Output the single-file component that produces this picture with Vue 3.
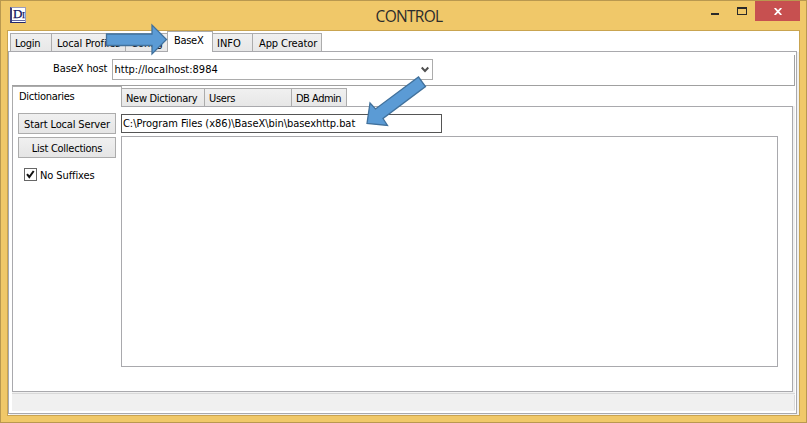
<script setup>
import { ref } from 'vue'

const mainTabs = [
  { name: 'Login', key: 'login' },
  { name: 'Local Profiles', key: 'profiles' },
  { name: 'Config', key: 'config' },
  { name: 'BaseX', key: 'basex' },
  { name: 'INFO', key: 'info' },
  { name: 'App Creator', key: 'creator' },
]
const subTabs = [
  { name: 'Dictionaries', key: 'dicts' },
  { name: 'New Dictionary', key: 'newdict' },
  { name: 'Users', key: 'users' },
  { name: 'DB Admin', key: 'admin' },
]
const active = ref('basex')
const activeSub = ref('dicts')
const host = ref('http://localhost:8984')
const serverPath = ref('C:\\Program Files (x86)\\BaseX\\bin\\basexhttp.bat')
const noSuffixes = ref(true)
</script>

<template>
  <div class="window">
    <header class="titlebar">
      <span class="app-icon"><span>D<small>I</small></span></span>
      <h1>CONTROL</h1>
      <div class="controls">
        <span class="min"></span>
        <span class="max"></span>
        <span class="close">
          <svg width="8" height="7" viewBox="0 0 8 7"><path d="M.7 0 7.3 7M7.3 0 .7 7" stroke="#fff" stroke-width="1.8" /></svg>
        </span>
      </div>
    </header>

    <main class="client">
      <nav class="tabs main-tabs">
        <button v-for="t in mainTabs" :key="t.key" :class="['tab', t.key, { active: active === t.key }]" @click="active = t.key"><span>{{ t.name }}</span></button>
      </nav>
      <section class="page">
        <div class="host-row">
          <span class="host-label">BaseX host</span>
          <div class="combo">
            <span class="host-text">{{ host }}</span>
            <svg width="8" height="7" viewBox="0 0 8 7"><path d="M.7 1.5 4 5 7.3 1.5" fill="none" stroke="#505050" stroke-width="2" /></svg>
          </div>
        </div>
        <nav class="tabs sub-tabs">
          <button v-for="t in subTabs" :key="t.key" :class="['tab', t.key, { active: activeSub === t.key }]" @click="activeSub = t.key"><span>{{ t.name }}</span></button>
        </nav>
        <section class="subpage">
          <aside class="actions">
            <button class="btn"><span class="start-text">Start Local Server</span></button>
            <button class="btn"><span class="list-text">List Collections</span></button>
            <div class="check" @click="noSuffixes = !noSuffixes">
              <span class="box"><svg v-if="noSuffixes" width="11" height="11" viewBox="0 0 11 11"><path d="M2 5.2 4.3 8 8.7 2" fill="none" stroke="#111" stroke-width="2" /></svg></span>
              <span class="check-text">No Suffixes</span>
            </div>
          </aside>
          <div class="fields">
            <div class="path"><span class="path-text">{{ serverPath }}</span></div>
            <div class="list"></div>
          </div>
        </section>
        <footer class="status"><span></span></footer>
      </section>
    </main>

    <svg class="arrows" width="807" height="423" viewBox="0 0 807 423">
      <g fill="#5b9bd5" stroke="#41719c" stroke-width="1.3">
        <path d="M106.5 34H152V25L166.5 39.5 152 54V45.5H106.5Z" />
        <path d="M418.5 77 425.5 86.500 383 118.500 387.500 125.500 367 123.500 370 103 375.500 109Z" />
      </g>
    </svg>
  </div>
</template>

<style>
body { margin: 0; overflow: hidden; }
</style>

<style scoped>
* { box-sizing: border-box; }
.window {
  position: relative; width: 807px; height: 423px; padding: 0 6px 6px;
  border: 1px solid #b9984f; background: #f0c869; color: #000;
  font: 11px/14px "DejaVu Sans Condensed", "DejaVu Sans", sans-serif;
}
.titlebar { height: 29px; display: grid; grid-template-columns: 100px 1fr 100px; align-items: start; }
.app-icon {
  display: block; width: 16px; height: 16px; margin: 6px 0 0 3px; padding-left: 1px;
  border: 1px solid #9a9cbc; border-left: 2px solid #3b3f7c; border-bottom: 1px solid #22266c;
  box-shadow: inset 0 -1px 0 #fff, inset 0 -2px 0 #6468a0;
  background: #fff; color: #10105c; font: 13px/12px "Liberation Serif", serif;
}
.app-icon span { display: block; white-space: nowrap; letter-spacing: -0.5px; -webkit-text-stroke: 0.25px #10105c; }
.app-icon small { font-size: 9px; }
h1 { margin: 5px 0 0 11px; text-align: center; font: 15.5px/20px "Open Sans", sans-serif; letter-spacing: -0.7px; color: #2c2c2c; }
.controls { display: flex; justify-content: flex-end; }
.min { width: 8px; height: 2px; margin: 12px 18px 0 0; background: #2a2a2a; flex: none; }
.max { width: 10px; height: 8px; margin: 6px 8px 0 0; border: 1px solid #2a2a2a; border-top-width: 2px; flex: none; }
.close { width: 45px; height: 20px; flex: none; background: #c75050; display: flex; align-items: center; justify-content: center; }
.client { width: 793px; height: 386px; border: 1px solid #c9a450; background: #fff; }
.tabs { display: flex; align-items: flex-end; }
button { font: inherit; color: inherit; margin: 0; }
.tab {
  height: 18px; padding: 2px 0 0 5px; text-align: left; white-space: nowrap; flex: none;
  border: 1px solid #acacac; border-bottom: 0; border-left-width: 0;
  background: linear-gradient(#f0f0f0, #e7e7e7);
}
.main-tabs { height: 20px; padding-left: 2px; }
.tab span, .combo span, .btn span, .path span, .check-text, .host-label { display: inline-block; white-space: nowrap; }
.login { width: 42px; border-left-width: 1px; padding-left: 4px; letter-spacing: -0.3px; }
.profiles { width: 74px; letter-spacing: -0.1px; }
.config { width: 42px; }
.basex { width: 46px; letter-spacing: -0.3px; }
.info { width: 40px; padding-left: 4px; }
.creator { width: 69px; padding-left: 6px; letter-spacing: -0.1px; }
.tab.active { position: relative; height: 21px; background: #fff; margin-bottom: -1px; }
.main-tabs .active { border-left-width: 1px; margin-left: -1px; padding: 0 0 2px 6px; }
.page { width: 789px; height: 363px; border: 1px solid #a9a9ad; box-shadow: 2px 1px 0 #f0f0f0; padding-left: 3px; }
.host-row { width: 783px; height: 34px; display: flex; align-items: flex-start; padding-top: 7px; border-bottom: 1px solid #a0a0a0; background: linear-gradient(#a0a0a0, #a0a0a0) right bottom / 1px 30px no-repeat; }
.host-label { width: 100px; padding: 3px 0 0 41px; letter-spacing: -0.1px; }
.combo { width: 321px; height: 21px; border: 1px solid #acacac; display: flex; justify-content: space-between; align-items: center; padding: 0 3px 0 1.5px; }
.sub-tabs { height: 20px; }
.sub-tabs .tab { padding-left: 4px; }
.sub-tabs .dicts { width: 110px; border-left-width: 1px; padding: 0 0 0 6px; letter-spacing: -0.3px; }
.newdict { width: 83px; letter-spacing: -0.3px; }
.users { width: 87px; letter-spacing: -0.3px; }
.admin { width: 55px; letter-spacing: -0.5px; }
.subpage { width: 781px; height: 286px; border: 1px solid #a9a9ad; box-shadow: 2px 0 0 #f0f0f0; display: flex; }
.actions { width: 108px; padding: 6px 0 0 5px; }
.btn { display: block; width: 98px; height: 21px; padding: 2px 0 0; margin-bottom: 3px; border: 1px solid #acacac; background: linear-gradient(#f0f0f0, #e5e5e5); text-align: center; }
.start-text { letter-spacing: -0.15px; }
.list-text { letter-spacing: -0.25px; }
.check { display: flex; align-items: center; height: 13px; margin: 10px 0 0 6px; }
.box { width: 13px; height: 13px; border: 1px solid #666; margin-right: 3px; flex: none; }
.box svg { display: block; }
.check-text { letter-spacing: -0.1px; padding-top: 2px; }
.path { width: 321px; height: 19px; border: 1px solid #555; margin: 7px 0 3px; padding-left: 1px; line-height: 17px; letter-spacing: -0.05px; }
.list { width: 657px; height: 231px; border: 1px solid #a9a9ad; }
.status { width: 783px; height: 19px; background: #f0f0f0; padding-top: 1px; }
.status span { display: block; width: 783px; height: 17px; border-top: 1px solid #d9d9d9; background: linear-gradient(#d9d9d9, #d9d9d9) right bottom / 1px 15px no-repeat; }
.arrows { position: absolute; left: -1px; top: -1px; pointer-events: none; }
</style>
